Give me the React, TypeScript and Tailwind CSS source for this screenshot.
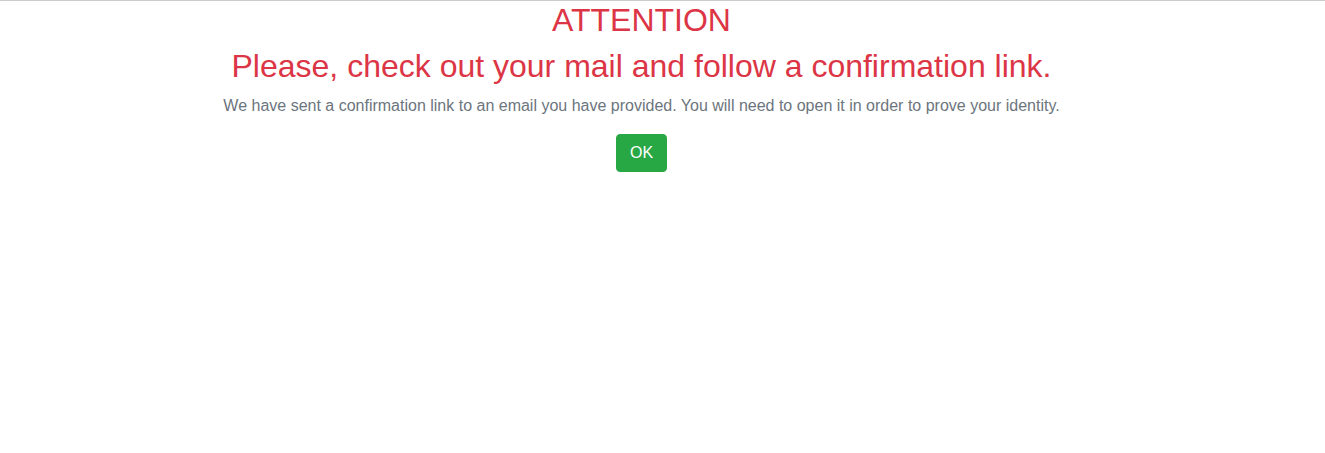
export default function App() {
  return (
    <div
      className="min-h-screen bg-white border-t border-[#cccccc]"
      style={{ fontFamily: '"Liberation Sans", Arial, Helvetica, sans-serif' }}
    >
      <div className="pr-[42px] text-center">
        <h2 className="text-[32px] leading-[1.2] font-normal text-[#dc3545] mb-2">ATTENTION</h2>
        <h2 className="text-[32px] leading-[1.2] font-normal text-[#dc3545] mb-2">
          Please, check out your mail and follow a confirmation link.
        </h2>
        <p className="text-base leading-6 text-[#6c757d] mb-4">
          We have sent a confirmation link to an email you have provided. You will need to open it in order to prove your identity.
        </p>
        <button className="bg-[#28a745] border border-[#28a745] text-white text-base leading-6 px-[13px] py-[6px] rounded">
          OK
        </button>
      </div>
    </div>
  );
}
